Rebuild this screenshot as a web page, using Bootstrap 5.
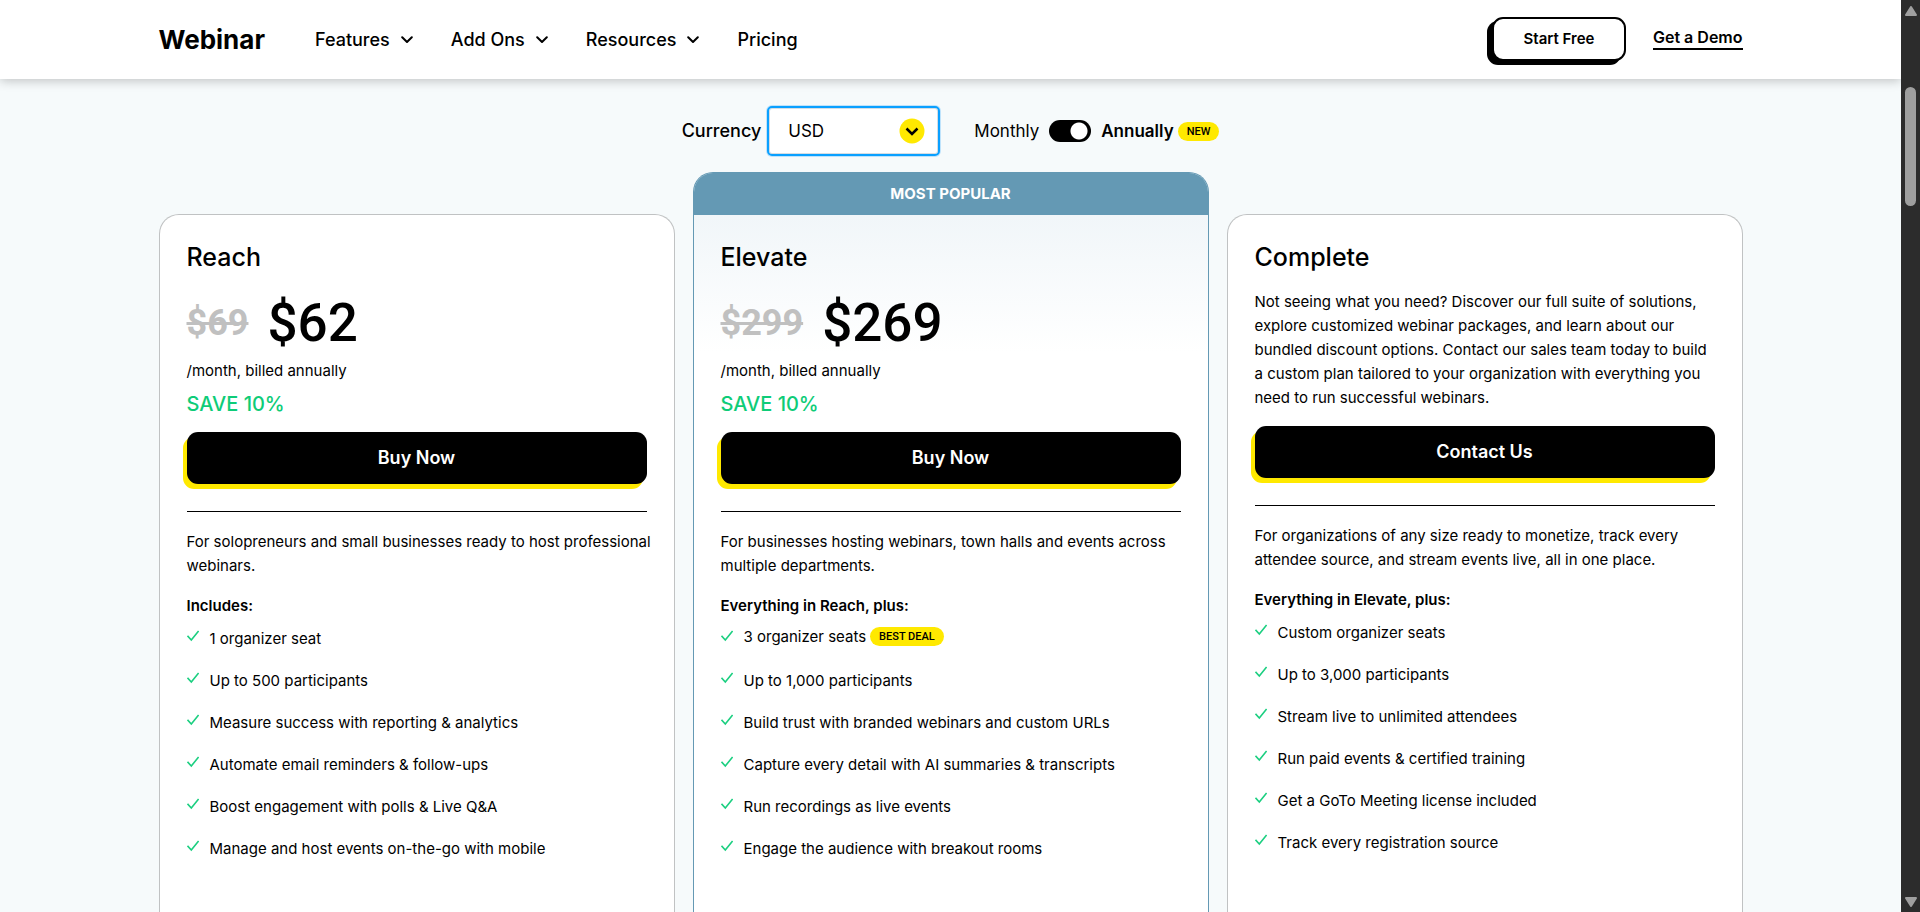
<!DOCTYPE html>
<html lang="en">
<head>
<meta charset="utf-8">
<meta name="viewport" content="width=device-width, initial-scale=1">
<title>Webinar – Pricing</title>
<link rel="stylesheet" href="https://cdn.jsdelivr.net/npm/bootstrap@5.3.0/dist/css/bootstrap.min.css">
<style>
  :root { --brand-yellow: #ffe900; --brand-blue: #6499b4; --brand-green: #0ecc78; }
  body { background: #f6fafb; color: #000; font-family: Inter, "Liberation Sans", sans-serif; font-size: 15px; line-height: 24px; padding-right: 19px; }
  a { color: #000; }
  .wrap { width: 100%; max-width: 1584px; margin: 0 auto; }

  .site-header { background: #fff; min-height: 79px; box-shadow: 0 2px 10px rgba(0, 0, 0, .22); }
  .brand { font-size: 26px; font-weight: 700; line-height: 32px; margin-right: 50px; }
  .main-nav { gap: 38px; }
  .main-nav .nav-link { color: #000; font-size: 18px; font-weight: 500; gap: 11px; padding: 0; }
  .header-actions { gap: 27px; padding-bottom: 2px; }
  .btn-outline { background: #fff; border: 2px solid #000; border-radius: 11px; box-shadow: -5px 4px 0 #000; font-size: 15px; font-weight: 600; width: 134px; height: 44px; }
  .demo-link { border-bottom: 2px solid #000; font-size: 16px; font-weight: 600; line-height: 21px; }

  .options { font-size: 17px; padding: 27px 0 16px; }
  .options .currency-label { font-size: 18px; font-weight: 500; }
  .currency-wrap { margin: 0 34px 0 6px; }
  .currency-box { border: 2px solid #0aa0ff; border-radius: 5px; box-shadow: 0 0 0 1px #bfe3fb, inset 0 0 0 1px #d5dde3; width: 173px; height: 50px; padding: 0 19px; font-size: 17px; color: #000; background-color: #fff; appearance: none; }
  .currency-mark { right: 15px; top: 12px; pointer-events: none; }
  .switch-pill { appearance: none; width: 42px; height: 22px; border-radius: 11px; background: radial-gradient(circle at 30px 11px, #fff 8px, #000 9px); margin: 0 10px; }
  .pill { background: var(--brand-yellow); border-radius: 10px; font-family: Roboto, "Liberation Sans", sans-serif; font-size: 11px; font-weight: 500; line-height: 19px; padding: 0 9px; }

  .plans { display: grid; grid-template-columns: repeat(3, minmax(0, 1fr)); gap: 18px; }
  .plan { background: #fff; border: 1px solid #c0c2c3; border-bottom: 0; border-radius: 20px 20px 0 0; margin-top: 42px; }
  .plan-body { padding: 26px 27px 40px; }
  .plan-top { margin-top: 0; border-color: var(--brand-blue); background: linear-gradient(#f1f6f9 43px, #fff 180px); }
  .plan-flag { background: var(--brand-blue); border-radius: 19px 19px 0 0; color: #fff; font-size: 15px; font-weight: 700; line-height: 42px; }
  .plan-name { font-size: 25px; font-weight: 500; line-height: 32px; margin: 0 0 17px; }
  .price { height: 66px; gap: 19px; margin-bottom: 3px; font-family: Roboto, "Liberation Sans", sans-serif; }
  .price-old { color: #c0c0c0; font-size: 36px; font-weight: 700; }
  .price-new { font-size: 53px; font-weight: 500; }
  .save { color: var(--brand-green); font-size: 20px; font-weight: 500; line-height: 26px; margin: 8px 0 15px; }
  .btn-plan { background: #000; color: #fff; border: 0; border-radius: 11px; box-shadow: -4px 5px 0 var(--brand-yellow); font-size: 18px; font-weight: 600; width: 100%; height: 52px; }
  .plan-rule { border-top: 1px solid #000; opacity: 1; margin: 27px 0 18px; }
  .feature-title { font-size: 15px; font-weight: 600; line-height: 24px; margin: 16px 0 0; }
  .features li { display: flex; align-items: flex-start; gap: 11px; line-height: 24px; padding: 9px 0; }
  .features svg { margin-top: 3px; flex: none; }
  .features .tagged { line-height: 19px; padding-bottom: 14px; }
  .features .pill { margin-left: 4px; }

  .page-scroll { position: fixed; top: 0; right: 0; bottom: 0; width: 19px; background: #2c2c2c; padding: 6px 0 5px; }
  .page-thumb { width: 11px; height: 119px; border-radius: 6px; background: #9f9f9f; margin-top: 71px; }
</style>
</head>
<body class="min-vh-100 d-flex flex-column">

<svg width="0" height="0" class="position-absolute" aria-hidden="true">
  <symbol id="chev" viewBox="0 0 12 12"><path d="M1.200 3.200 6 8l4.800-4.800" fill="none" stroke="#000" stroke-width="2" stroke-linecap="round" stroke-linejoin="round"/></symbol>
  <symbol id="tick" viewBox="0 0 12 12"><path d="M.5 5.800 4.300 10 11.600 1" fill="none" stroke="#1bcf80" stroke-width="1.600"/></symbol>
</svg>

<header class="site-header d-flex position-relative">
  <div class="wrap d-flex align-items-center">
    <a class="brand text-decoration-none" href="#">Webinar</a>
    <nav class="main-nav nav" aria-label="Main">
      <a class="nav-link d-flex align-items-center" href="#">Features <svg width="12" height="12" aria-hidden="true"><use href="#chev"/></svg></a>
      <a class="nav-link d-flex align-items-center" href="#">Add Ons <svg width="12" height="12" aria-hidden="true"><use href="#chev"/></svg></a>
      <a class="nav-link d-flex align-items-center" href="#">Resources <svg width="12" height="12" aria-hidden="true"><use href="#chev"/></svg></a>
      <a class="nav-link d-flex align-items-center" href="#">Pricing</a>
    </nav>
    <div class="header-actions d-flex align-items-center ms-auto">
      <button type="button" class="btn-outline">Start Free</button>
      <a class="demo-link text-decoration-none" href="#">Get a Demo</a>
    </div>
  </div>
</header>

<main class="wrap d-flex flex-column flex-grow-1">
  <form class="options d-flex align-items-center justify-content-center">
    <label for="currency" class="currency-label">Currency</label>
    <div class="currency-wrap position-relative">
      <select id="currency" class="currency-box"><option>USD</option><option>EUR</option><option>GBP</option></select>
      <svg class="currency-mark position-absolute" width="26" height="26" viewBox="0 0 26 26" aria-hidden="true"><circle cx="13" cy="13" r="12.500" fill="#ffe900"/><path d="m7.500 10.500 5.500 5.500 5.500-5.500" fill="none" stroke="#000" stroke-width="2.500"/></svg>
    </div>
    <label for="term">Monthly</label>
    <input id="term" class="switch-pill" type="checkbox" role="switch" checked aria-label="Annual billing">
    <label for="term" class="fw-semibold">Annually</label>
    <span class="pill ms-1">NEW</span>
  </form>

  <section class="plans flex-grow-1">
    <article class="plan">
      <div class="plan-body">
        <h2 class="plan-name">Reach</h2>
        <div class="price d-flex align-items-center"><s class="price-old">$69</s><span class="price-new">$62</span></div>
        <div>/month, billed annually</div>
        <div class="save">SAVE 10%</div>
        <button type="button" class="btn-plan">Buy Now</button>
        <hr class="plan-rule">
        <p class="mb-0 text-nowrap">For solopreneurs and small businesses ready to host professional<br>webinars.</p>
        <h3 class="feature-title">Includes:</h3>
        <ul class="features list-unstyled mb-0">
          <li><svg width="12" height="12"><use href="#tick"/></svg>1 organizer seat</li>
          <li><svg width="12" height="12"><use href="#tick"/></svg>Up to 500 participants</li>
          <li><svg width="12" height="12"><use href="#tick"/></svg>Measure success with reporting &amp; analytics</li>
          <li><svg width="12" height="12"><use href="#tick"/></svg>Automate email reminders &amp; follow-ups</li>
          <li><svg width="12" height="12"><use href="#tick"/></svg>Boost engagement with polls &amp; Live Q&amp;A</li>
          <li><svg width="12" height="12"><use href="#tick"/></svg>Manage and host events on-the-go with mobile</li>
        </ul>
      </div>
    </article>

    <article class="plan plan-top">
      <div class="plan-flag text-center">MOST POPULAR</div>
      <div class="plan-body">
        <h2 class="plan-name">Elevate</h2>
        <div class="price d-flex align-items-center"><s class="price-old">$299</s><span class="price-new">$269</span></div>
        <div>/month, billed annually</div>
        <div class="save">SAVE 10%</div>
        <button type="button" class="btn-plan">Buy Now</button>
        <hr class="plan-rule">
        <p class="mb-0">For businesses hosting webinars, town halls and events across multiple departments.</p>
        <h3 class="feature-title">Everything in Reach, plus:</h3>
        <ul class="features list-unstyled mb-0">
          <li class="tagged"><svg width="12" height="12"><use href="#tick"/></svg><span class="d-flex">3 organizer seats <span class="pill">BEST DEAL</span></span></li>
          <li><svg width="12" height="12"><use href="#tick"/></svg>Up to 1,000 participants</li>
          <li><svg width="12" height="12"><use href="#tick"/></svg>Build trust with branded webinars and custom URLs</li>
          <li><svg width="12" height="12"><use href="#tick"/></svg>Capture every detail with AI summaries &amp; transcripts</li>
          <li><svg width="12" height="12"><use href="#tick"/></svg>Run recordings as live events</li>
          <li><svg width="12" height="12"><use href="#tick"/></svg>Engage the audience with breakout rooms</li>
        </ul>
      </div>
    </article>

    <article class="plan">
      <div class="plan-body">
        <h2 class="plan-name">Complete</h2>
        <p class="mb-3">Not seeing what you need? Discover our full suite of solutions, explore customized webinar packages, and learn about our bundled discount options. Contact our sales team today to build a custom plan tailored to your organization with everything you need to run successful webinars.</p>
        <button type="button" class="btn-plan">Contact Us</button>
        <hr class="plan-rule">
        <p class="mb-0">For organizations of any size ready to monetize, track every attendee source, and stream events live, all in one place.</p>
        <h3 class="feature-title">Everything in Elevate, plus:</h3>
        <ul class="features list-unstyled mb-0">
          <li><svg width="12" height="12"><use href="#tick"/></svg>Custom organizer seats</li>
          <li><svg width="12" height="12"><use href="#tick"/></svg>Up to 3,000 participants</li>
          <li><svg width="12" height="12"><use href="#tick"/></svg>Stream live to unlimited attendees</li>
          <li><svg width="12" height="12"><use href="#tick"/></svg>Run paid events &amp; certified training</li>
          <li><svg width="12" height="12"><use href="#tick"/></svg>Get a GoTo Meeting license included</li>
          <li><svg width="12" height="12"><use href="#tick"/></svg>Track every registration source</li>
        </ul>
      </div>
    </article>
  </section>
</main>

<div class="page-scroll d-flex flex-column align-items-center" aria-hidden="true">
  <svg width="12" height="10" viewBox="0 0 12 10"><path d="M6 1 11 9H1Z" fill="#9f9f9f" stroke="#9f9f9f" stroke-linejoin="round" stroke-width="2"/></svg>
  <div class="page-thumb"></div>
  <svg class="mt-auto" width="12" height="10" viewBox="0 0 12 10"><path d="M6 9 11 1H1Z" fill="#9f9f9f" stroke="#9f9f9f" stroke-linejoin="round" stroke-width="2"/></svg>
</div>

<script src="https://cdn.jsdelivr.net/npm/bootstrap@5.3.0/dist/js/bootstrap.bundle.min.js"></script>
</body>
</html>
